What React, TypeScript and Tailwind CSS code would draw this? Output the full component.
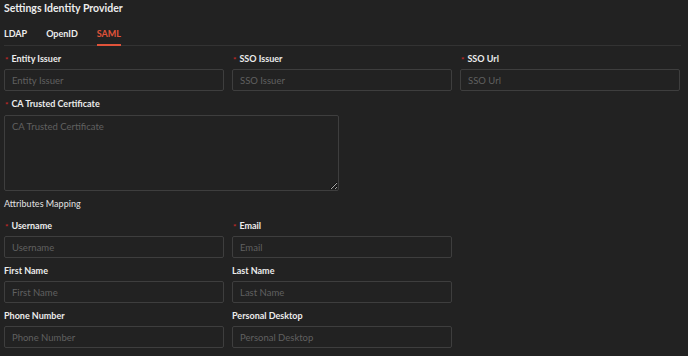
import React from "react";

const font = { fontFamily: "Lato, 'Noto Sans', sans-serif" };

function Label({ text, required }: { text: string; required?: boolean }) {
  return (
    <div className="flex items-center h-[16px] text-[9px] font-bold text-[#ececec] leading-none">
      {required && <span className="text-[#c62828] ml-[1px] mr-[3px] text-[8px] relative top-[2px]">*</span>}
      <span>{text}</span>
    </div>
  );
}

function Field({ label, required }: { label: string; required?: boolean }) {
  return (
    <div className="flex flex-col gap-[3px]">
      <Label text={label} required={required} />
      <input
        placeholder={label}
        className="h-[22px] w-full bg-[#222222] border border-[#3e3e3e] rounded-[2px] px-[7px] text-[9.5px] text-[#ddd] placeholder:text-[#606060] outline-none"
        style={font}
      />
    </div>
  );
}

export default function App() {
  return (
    <div className="w-[688px] h-[356px] bg-[#222222] text-[#e8e8e8] overflow-hidden" style={font}>
      <div className="px-[4px]">
        <div className="h-[16px] text-[10.5px] font-bold leading-[16px] text-[#ececec]">Settings Identity Provider</div>
        <div className="mt-[10px] flex w-[677px] border-b border-[#333333] h-[20px]">
          <div className="text-[9px] font-bold leading-[16px] text-[#ececec] mr-[19px]">LDAP</div>
          <div className="text-[9px] font-bold leading-[16px] text-[#ececec] mr-[19px]">OpenID</div>
          <div className="text-[9px] font-bold leading-[16px] text-[#e0533a] border-b-2 border-[#e0533a] h-[20px] -mb-px">SAML</div>
        </div>
        <div className="mt-[4px] grid grid-cols-[220px_220px_220px] gap-x-[8px]">
          <Field label="Entity Issuer" required />
          <Field label="SSO Issuer" required />
          <Field label="SSO Url" required />
        </div>
        <div className="mt-[4px] flex flex-col gap-[4px] w-[335px]">
          <Label text="CA Trusted Certificate" required />
          <textarea
            placeholder="CA Trusted Certificate"
            className="h-[76px] w-full bg-[#222222] border border-[#3e3e3e] rounded-[2px] px-[7px] py-[4px] text-[9.5px] text-[#ddd] placeholder:text-[#606060] outline-none block"
            style={font}
          />
        </div>
        <div className="mt-[5px] h-[16px] flex items-center text-[9px] font-medium text-[#dcdcdc]">Attributes Mapping</div>
        <div className="mt-[5px] grid grid-cols-[220px_220px] gap-x-[8px] gap-y-[4px]">
          <Field label="Username" required />
          <Field label="Email" required />
          <Field label="First Name" />
          <Field label="Last Name" />
          <Field label="Phone Number" />
          <Field label="Personal Desktop" />
        </div>
      </div>
    </div>
  );
}
